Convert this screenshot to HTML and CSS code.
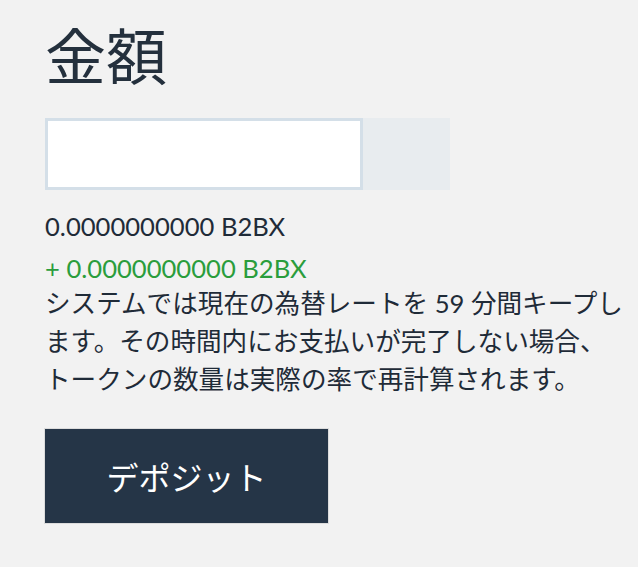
FILE: index.html
```html
<!DOCTYPE html>
<html lang="ja">
<head>
<meta charset="utf-8">
<link rel="stylesheet" href="styles.css">
</head>
<body>
<main class="panel">
  <h1 class="title">金額</h1>
  <div class="input-group">
    <input class="amount-input" type="text">
    <span class="addon"></span>
  </div>
  <div class="amount">0.0000000000 B2BX</div>
  <div class="bonus">+ 0.0000000000 B2BX</div>
  <p class="note">システムでは現在の為替レートを 59 分間キープします。その時間内にお支払いが完了しない場合、トークンの数量は実際の率で再計算されます。</p>
  <button class="deposit" type="button">デポジット</button>
</main>
</body>
</html>
```
FILE: styles.css
```css
html, body {
  margin: 0;
  padding: 0;
  background: #f2f2f2;
}
body {
  font-family: Lato, "Noto Sans CJK JP", sans-serif;
  color: #1f2b38;
}
.panel {
  padding: 19px 0 0 45px;
  width: 585px;
}
.title {
  margin: 0;
  font-family: "Noto Sans CJK JP", sans-serif;
  font-weight: 400;
  font-size: 61px;
  line-height: 70px;
  color: #24303d;
}
.input-group {
  display: flex;
  margin-top: 29px;
}
.amount-input {
  box-sizing: border-box;
  width: 318px;
  height: 72px;
  margin: 0;
  border: 3px solid #d4dfe8;
  background: #fff;
  outline: none;
  padding: 0 12px;
}
.addon {
  width: 87px;
  height: 72px;
  background: #e8ecef;
}
.amount {
  margin-top: 20px;
  font-size: 25.6px;
  line-height: 32px;
  color: #1f2b38;
}
.bonus {
  margin-top: 10px;
  font-size: 25.6px;
  line-height: 32px;
  color: #2a9d3c;
}
.note {
  margin: 0;
  font-size: 25.6px;
  line-height: 38px;
  color: #1f2b38;
}
.deposit {
  display: block;
  margin: 30px 0 0 -1px;
  box-sizing: border-box;
  width: 285px;
  height: 96px;
  background: #253547;
  border: 1px solid #dcdcdc;
  color: #fff;
  font-family: "Noto Sans CJK JP", sans-serif;
  font-size: 32px;
  padding: 0;
}
```
